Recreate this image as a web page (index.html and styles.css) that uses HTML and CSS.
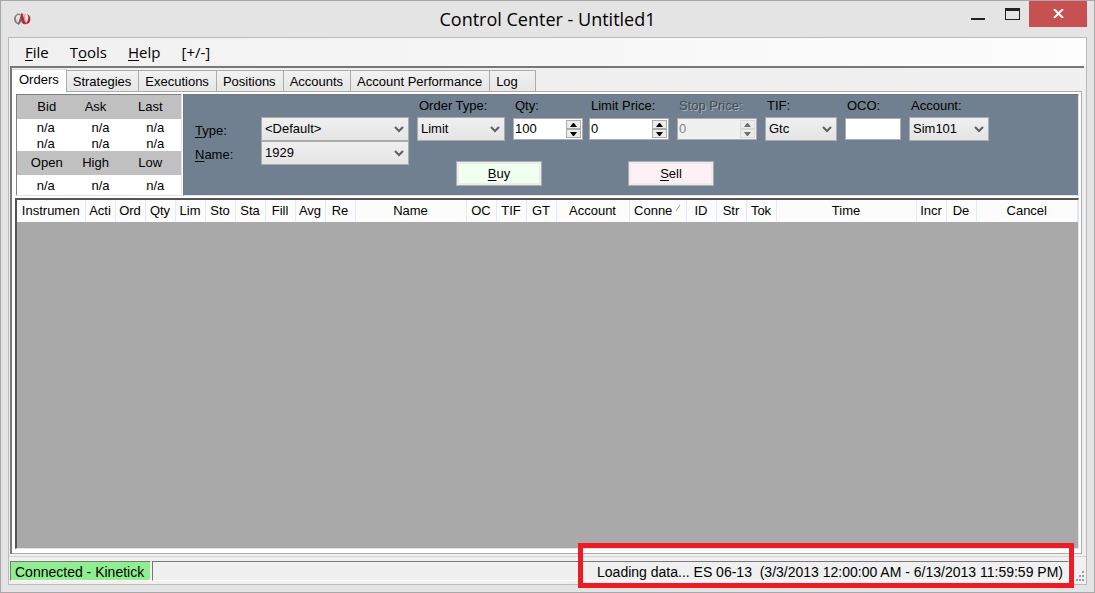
FILE: index.html
```html
<!DOCTYPE html>
<html lang="en">

<head>
  <meta charset="UTF-8">
  <meta name="viewport" content="width=device-width, initial-scale=1.0">
  <title>Control Center - Untitled1</title>
  <link rel="stylesheet" href="styles.css">
</head>

<body>
  <header class="titlebar">
    <svg class="logo" viewBox="0 0 18 14" width="18" height="14" aria-hidden="true">
      <path d="M4 12C0 10 0 4 4 2c2-1 4 0 5 2C6 2 3 3 3 6c0 3 1 4 3 6z" fill="#8f817a" />
      <path d="M5 12c3-1 2-8 5-10" fill="none" stroke="#75665f" stroke-width="2" />
      <path d="M8 1c3 1 3 9 6 11-4 1-6-1-6-5z" fill="#c4262e" />
      <path d="M14 12c4-1 5-8 0-10 2 3 2 6-1 9z" fill="#b32028" />
      <path d="M12 2c-1 3 0 5 0 7" fill="none" stroke="#d98a8e" stroke-width="1" />
    </svg>
    <h1>Control Center - Untitled1</h1>
    <div class="window-buttons">
      <button type="button" class="minimize" aria-label="Minimize">
        <svg viewBox="0 0 14 12" width="14" height="12"><path d="M0 10h14v2H0z" fill="#222" /></svg>
      </button>
      <button type="button" class="maximize" aria-label="Maximize">
        <svg viewBox="0 0 15 12" width="15" height="12"><path d="M0 0h15v12H0zM1 3v8h13V3z" fill="#222" fill-rule="evenodd" /></svg>
      </button>
      <button type="button" class="close" aria-label="Close">
        <svg viewBox="0 0 11 9" width="11" height="9"><path d="M1 0l9 9M10 0L1 9" stroke="#fff" stroke-width="2" /></svg>
      </button>
    </div>
  </header>

  <div class="client">
    <nav class="menu">
      <a href="#file"><u>F</u>ile</a>
      <a href="#tools">T<u>o</u>ols</a>
      <a href="#help"><u>H</u>elp</a>
      <a href="#toggle">[+/-]</a>
    </nav>

    <main>
      <div class="tabs" role="tablist">
        <button type="button" role="tab" class="tab active" aria-selected="true">Orders</button>
        <button type="button" role="tab" class="tab">Strategies</button>
        <button type="button" role="tab" class="tab">Executions</button>
        <button type="button" role="tab" class="tab">Positions</button>
        <button type="button" role="tab" class="tab">Accounts</button>
        <button type="button" role="tab" class="tab">Account Performance</button>
        <button type="button" role="tab" class="tab tab-last">Log</button>
      </div>

      <div class="page">
        <div class="order-entry">
          <table class="quote">
            <tr><th>Bid</th><th>Ask</th><th>Last</th></tr>
            <tr><td>n/a</td><td>n/a</td><td>n/a</td></tr>
            <tr><td>n/a</td><td>n/a</td><td>n/a</td></tr>
            <tr><th>Open</th><th>High</th><th>Low</th></tr>
            <tr class="tall"><td>n/a</td><td>n/a</td><td>n/a</td></tr>
          </table>

          <form class="order-form">
            <div class="strategy">
              <label for="type"><u>T</u>ype:</label>
              <div class="select">
                <select id="type"><option>&lt;Default&gt;</option></select>
                <svg viewBox="0 0 10 7" width="10" height="7"><path d="M1 1l4 4 4-4" /></svg>
              </div>
              <label for="name"><u>N</u>ame:</label>
              <div class="select">
                <select id="name"><option>1929</option></select>
                <svg viewBox="0 0 10 7" width="10" height="7"><path d="M1 1l4 4 4-4" /></svg>
              </div>
            </div>

            <div class="order">
              <div class="fields">
                <div class="field order-type">
                  <label for="orderType">Order Type:</label>
                  <div class="select">
                    <select id="orderType"><option>Limit</option></select>
                    <svg viewBox="0 0 10 7" width="10" height="7"><path d="M1 1l4 4 4-4" /></svg>
                  </div>
                </div>
                <div class="field qty">
                  <label for="qty">Qty:</label>
                  <div class="spinner">
                    <input type="text" id="qty" value="100">
                    <div class="steps">
                      <button type="button" aria-label="Increase quantity"><svg viewBox="0 0 7 4" width="7" height="4"><path d="M0 4L3 0h1l3 4z" /></svg></button>
                      <button type="button" aria-label="Decrease quantity"><svg viewBox="0 0 7 4" width="7" height="4"><path d="M0 0h7L4 4H3z" /></svg></button>
                    </div>
                  </div>
                </div>
                <div class="field price">
                  <label for="limitPrice">Limit Price:</label>
                  <div class="spinner">
                    <input type="text" id="limitPrice" value="0">
                    <div class="steps">
                      <button type="button" aria-label="Increase limit price"><svg viewBox="0 0 7 4" width="7" height="4"><path d="M0 4L3 0h1l3 4z" /></svg></button>
                      <button type="button" aria-label="Decrease limit price"><svg viewBox="0 0 7 4" width="7" height="4"><path d="M0 0h7L4 4H3z" /></svg></button>
                    </div>
                  </div>
                </div>
                <div class="field price disabled">
                  <label for="stopPrice">Stop Price:</label>
                  <div class="spinner">
                    <input type="text" id="stopPrice" value="0" disabled>
                    <div class="steps">
                      <button type="button" aria-label="Increase stop price" disabled><svg viewBox="0 0 7 4" width="7" height="4"><path d="M0 4L3 0h1l3 4z" /></svg></button>
                      <button type="button" aria-label="Decrease stop price" disabled><svg viewBox="0 0 7 4" width="7" height="4"><path d="M0 0h7L4 4H3z" /></svg></button>
                    </div>
                  </div>
                </div>
                <div class="field tif">
                  <label for="tif">TIF:</label>
                  <div class="select">
                    <select id="tif"><option>Gtc</option></select>
                    <svg viewBox="0 0 10 7" width="10" height="7"><path d="M1 1l4 4 4-4" /></svg>
                  </div>
                </div>
                <div class="field oco">
                  <label for="oco">OCO:</label>
                  <input type="text" id="oco" class="textbox">
                </div>
                <div class="field account">
                  <label for="account">Account:</label>
                  <div class="select">
                    <select id="account"><option>Sim101</option></select>
                    <svg viewBox="0 0 10 7" width="10" height="7"><path d="M1 1l4 4 4-4" /></svg>
                  </div>
                </div>
              </div>
              <div class="actions">
                <button type="button" class="buy"><u>B</u>uy</button>
                <button type="button" class="sell"><u>S</u>ell</button>
              </div>
            </div>
          </form>
        </div>

        <div class="grid">
          <table>
            <colgroup>
              <col class="instrument">
              <col span="9" class="narrow">
              <col class="name">
              <col span="3" class="narrow">
              <col class="acct">
              <col class="connection">
              <col span="3" class="narrow">
              <col class="time">
              <col span="2" class="narrow">
              <col>
            </colgroup>
            <thead>
              <tr>
                <th>Instrumen</th>
                <th>Acti</th>
                <th>Ord</th>
                <th>Qty</th>
                <th>Lim</th>
                <th>Sto</th>
                <th>Sta</th>
                <th>Fill</th>
                <th>Avg</th>
                <th>Re</th>
                <th>Name</th>
                <th>OC</th>
                <th>TIF</th>
                <th>GT</th>
                <th>Account</th>
                <th>Conne <svg viewBox="0 0 5 10" width="5" height="10"><path d="M0 6l4-6" stroke="#999" /></svg></th>
                <th>ID</th>
                <th>Str</th>
                <th>Tok</th>
                <th>Time</th>
                <th>Incr</th>
                <th>De</th>
                <th>Cancel</th>
              </tr>
            </thead>
          </table>
        </div>
      </div>
    </main>

    <footer class="status">
      <div class="connection-state">Connected - Kinetick</div>
      <div class="message"><span class="callout">Loading data... ES 06-13&nbsp; (3/3/2013 12:00:00 AM - 6/13/2013 11:59:59 PM)</span></div>
      <svg class="grip" viewBox="0 0 8 10" width="8" height="10" aria-hidden="true">
        <path d="M6 0h2v2H6zM3 4h2v2H3zM6 4h2v2H6zM0 8h2v2H0zM3 8h2v2H3zM6 8h2v2H6z" fill="#a0a0a0" />
      </svg>
    </footer>
  </div>
</body>

</html>
```
FILE: styles.css
```css
* {
  box-sizing: border-box;
}

body {
  margin: 0;
  padding: 0 7px 7px;
  min-height: 100vh;
  display: flex;
  flex-direction: column;
  background-color: #e4e4e4;
  border: 1px solid #a8a8a8;
  font-family: "Liberation Sans", Arial, sans-serif;
  font-size: 13px;
  line-height: 16px;
  color: #000;
}

button,
input,
select {
  font: inherit;
  color: inherit;
  margin: 0;
  padding: 0;
  border: 0;
  border-radius: 0;
}

table {
  border-collapse: collapse;
  table-layout: fixed;
}

th,
td {
  padding: 0;
  font-weight: normal;
  text-align: center;
}

u {
  text-underline-offset: 2px;
}

/* Title bar */
.titlebar {
  display: grid;
  grid-template-columns: 1fr auto 1fr;
  height: 36px;
}

.logo {
  margin: 11px 0 0 5px;
}

.titlebar h1 {
  margin: 0;
  font-family: "Open Sans", "Noto Sans", sans-serif;
  font-size: 18px;
  font-weight: normal;
  line-height: 36px;
}

.window-buttons {
  display: flex;
  justify-content: flex-end;
  align-items: flex-start;
}

.window-buttons button {
  display: flex;
  justify-content: center;
  background: none;
  height: 26px;
  padding-top: 7px;
}

.minimize,
.maximize {
  width: 34px;
}

.window-buttons .close {
  width: 58px;
  padding-top: 8px;
  background-color: #c75050;
}

/* Client area */
.client {
  flex-grow: 1;
  display: flex;
  flex-direction: column;
  border: 1px solid #bababa;
  background-color: #f0f0f0;
}

.menu {
  display: flex;
  gap: 21px;
  height: 28px;
  padding-left: 16px;
  background: linear-gradient(to right, #f0f0f0, #fdfdfd);
  font-family: "Open Sans", "Noto Sans", sans-serif;
  font-size: 15px;
  line-height: 29px;
}

.menu a {
  color: #000;
  text-decoration: none;
}

main {
  flex-grow: 1;
  display: flex;
  flex-direction: column;
  margin: 0 2px 0 1px;
  padding: 1px 2px 0 0;
  border-top: 2px solid #777;
  border-left: 2px solid #777;
}

.tabs {
  display: flex;
  align-items: flex-end;
  height: 22px;
}

.tab {
  height: 21px;
  padding: 2px 7px 0 6px;
  border: 1px solid #acacac;
  border-bottom: 0;
  border-left-width: 0;
  background: linear-gradient(#f2f2f2, #e6e6e6);
}

.tab.active {
  z-index: 1;
  height: 23px;
  margin-bottom: -1px;
  padding: 0 7px 2px;
  background: #fff;
  border-top-color: #dcdcdc;
}

.tab-last {
  width: 46px;
  text-align: left;
}

.page {
  flex-grow: 1;
  display: flex;
  flex-direction: column;
  padding: 2px 2px 4px 3px;
  background-color: #fff;
  border: 1px solid #acacac;
  border-left: 0;
}

.order-entry {
  display: flex;
  gap: 1px;
  padding-left: 1px;
}

/* Bid / ask panel */
.quote {
  width: 166px;
  border: 1px solid #808080;
  border-right-color: #e3e3e3;
  border-bottom-color: #e3e3e3;
}

.quote th {
  height: 24px;
  padding-right: 7px;
  background-color: #c0c0c0;
}

.quote th:first-child {
  padding: 0 0 0 5px;
}

.quote td {
  height: 16px;
  padding: 2px 0 0 3px;
  line-height: 14px;
}

.quote .tall td {
  height: 20px;
}

/* Order form */
.order-form {
  flex-grow: 1;
  display: flex;
  gap: 8px;
  padding-left: 11px;
  border: 1px solid #777;
  border-right-color: #e3e3e3;
  border-bottom-color: #e3e3e3;
  background-color: #708090;
}

.strategy {
  display: grid;
  grid-template-columns: 66px 148px;
  grid-auto-rows: 24px;
  align-items: center;
  padding-top: 22px;
}

.strategy label {
  padding-top: 3px;
}

.fields {
  display: flex;
  gap: 8px;
  padding-top: 3px;
}

.field {
  display: flex;
  flex-direction: column;
}

.field label {
  height: 19px;
  padding-left: 2px;
}

.order-type {
  width: 88px;
}

.qty {
  width: 70px;
  margin-right: -2px;
}

.price,
.account {
  width: 80px;
}

.tif {
  width: 72px;
}

.oco {
  width: 56px;
}

.select {
  display: grid;
  align-items: center;
}

.select select,
.select svg {
  grid-area: 1 / 1;
}

.select select {
  appearance: none;
  width: 100%;
  height: 24px;
  padding-left: 3px;
  border: 1px solid #acacac;
  background: linear-gradient(#f0f0f0, #e5e5e5);
}

.select svg {
  justify-self: end;
  margin-right: 5px;
  fill: none;
  stroke: #606060;
  stroke-width: 2;
  pointer-events: none;
}

.spinner,
.textbox {
  height: 22px;
  margin-top: 1px;
  border: 1px solid #abadb3;
  background-color: #fff;
}

.textbox {
  width: 100%;
}

.spinner {
  display: flex;
  padding: 1px;
}

.spinner input {
  flex-grow: 1;
  width: 0;
  background: none;
}

.steps {
  display: flex;
  flex-direction: column;
  width: 15px;
}

.steps button {
  flex-grow: 1;
  display: flex;
  align-items: center;
  justify-content: center;
  border: 1px solid #acacac;
  background-color: #ececec;
}

.disabled label {
  color: #444c54;
  text-shadow: 1px 1px #a9b3bd;
}

.disabled .spinner {
  background-color: #f0f0f0;
  color: #838383;
}

.disabled .steps button {
  border-color: #d9d9d9;
}

.disabled svg {
  fill: #707070;
}

.actions {
  display: flex;
  gap: 86px;
  padding: 20px 0 9px 39px;
}

.actions button {
  width: 86px;
  height: 25px;
  border: 1px solid #acacac;
  box-shadow: inset 0 0 0 2px #ececec;
}

.buy {
  background-color: #f0fff0;
}

.sell {
  background-color: #fff0f5;
}

/* Orders grid */
.grid {
  flex-grow: 1;
  margin-top: 2px;
  border-top: 2px solid #555;
  border-left: 2px solid #555;
  border-right: 1px solid #e3e3e3;
  border-bottom: 1px solid #e3e3e3;
  background-color: #a9a9a9;
}

.grid table {
  width: 100%;
  background-color: #fcfcfc;
}

.grid th {
  height: 22px;
  border-right: 1px solid #e0ecfa;
  white-space: nowrap;
}

.instrument {
  width: 68px;
}

.narrow {
  width: 30px;
}

.name {
  width: 111px;
}

.acct {
  width: 73px;
}

.connection {
  width: 57px;
}

.time {
  width: 140px;
}

/* Status bar */
.status {
  display: flex;
  align-items: flex-start;
  margin-top: 2px;
  padding: 4px 2px 3px 1px;
  border-top: 1px solid #d4d4d4;
}

.connection-state,
.message {
  height: 20px;
  border: 1px solid #777;
  border-right-color: #fff;
  border-bottom-color: #fff;
  font-size: 14px;
  line-height: 21px;
  white-space: nowrap;
}

.connection-state {
  width: 141px;
  margin-right: 1px;
  padding-left: 4px;
  background-color: #90ee90;
}

.message {
  flex-grow: 1;
  padding-right: 5px;
  text-align: right;
}

.callout {
  position: relative;
}

/* Red frame drawn over the loading message */
.callout::after {
  content: "";
  position: absolute;
  inset: -21px -11px -8px -19px;
  border: 5px solid #ed1c24;
}

.grip {
  margin: 10px 0 0 7px;
}
```
